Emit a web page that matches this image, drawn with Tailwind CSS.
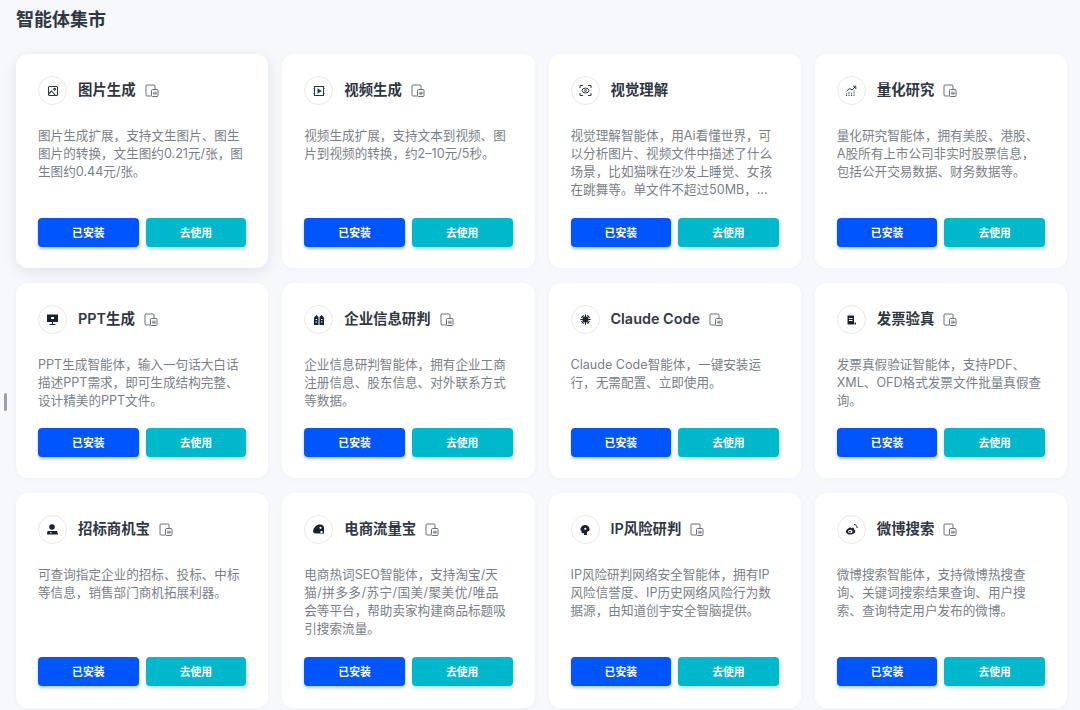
<!DOCTYPE html>
<html lang="zh">
<head>
    <meta charset="UTF-8">
    <meta name="viewport" content="width=device-width, initial-scale=1.0">
    <title>智能体集市</title>
    <script src="https://cdn.jsdelivr.net/npm/@tailwindcss/browser@4"></script>
</head>
<body class="bg-[#f6f8fb] h-[710px] overflow-hidden font-['Inter','Noto_Sans_CJK_SC',sans-serif]">
    <!-- 滚动条 -->
    <div class="absolute left-[4px] top-[393px] w-[3px] h-[18px] rounded-full bg-[#9aa0a8]"></div>

    <div class="pl-[16px] pr-[13px]">
        <h1 class="h-[54px] pt-[9px] text-[18px] leading-[22px] font-bold text-[#303744]">智能体集市</h1>

        <div class="grid grid-cols-4 grid-rows-[214px_195px_215px] gap-x-[14px] gap-y-[15px]">

            <div class="bg-white rounded-[12px] shadow-[0_4px_14px_rgba(30,50,90,0.10)] p-[22px] pb-[21px] flex flex-col">
                <div class="flex items-center h-[29px] mb-[22px]">
                    <div class="w-[29px] h-[29px] rounded-full border border-[#e8e8e8] flex items-center justify-center mr-[11px]">
                        <svg class="w-[12px] h-[12px]" viewBox="0 0 12 12" fill="none" stroke="#303744" stroke-width="1.1"><rect x="1.5" y="1.5" width="9" height="9" rx="1"/><circle cx="7.6" cy="4.2" r="0.9"/><path d="M1.5 9l3-3 4 4.5"/></svg>
                    </div>
                    <span class="pb-[1px] text-[14.4px] font-semibold text-[#303744]">图片生成</span>
                    <svg class="ml-[9px] w-[14px] h-[14px]" viewBox="0 0 14 14" fill="none" stroke="#5a606b" stroke-width="0.9"><path d="M6 12H2a1 1 0 0 1-1-1V2a1 1 0 0 1 1-1h7a1 1 0 0 1 1 1v3.500"/><rect x="6.500" y="5.500" width="6.500" height="7" rx="1"/><path d="M9 7.500v3.500M10.800 7.500v3.500M8 9.200h4" stroke-width="0.7"/></svg>
                </div>
                <p class="text-[12.6px] leading-[18px] text-[#7a7f88]">图片生成扩展，支持文生图片、图生图片的转换，文生图约0.21元/张，图生图约0.44元/张。</p>
                <div class="mt-auto grid grid-cols-2 gap-[7px] h-[29px]">
                    <button class="pt-[4px] rounded-[4px] bg-[#0055ff] shadow-[0_2px_3px_rgba(0,85,255,0.3)] text-white text-[10.8px] font-semibold">已安装</button>
                    <button class="pt-[4px] rounded-[4px] bg-[#00b8cc] shadow-[0_2px_3px_rgba(0,184,204,0.3)] text-white text-[10.8px] font-semibold">去使用</button>
                </div>
            </div>

            <div class="bg-white rounded-[12px] shadow-[0_1px_6px_rgba(30,50,90,0.03)] p-[22px] pb-[21px] flex flex-col">
                <div class="flex items-center h-[29px] mb-[22px]">
                    <div class="w-[29px] h-[29px] rounded-full border border-[#e8e8e8] flex items-center justify-center mr-[11px]">
                        <svg class="w-[12px] h-[12px]" viewBox="0 0 12 12" fill="none" stroke="#303744" stroke-width="1.1"><path d="M1.500 1.500h9v9h-9z"/><path d="M5 4.200l2.800 1.800L5 7.800z" fill="#303744"/><path d="M0.500 3.500h1.500M0.500 8.500h1.500M10 3.500h1.500M10 8.500h1.500"/></svg>
                    </div>
                    <span class="pb-[1px] text-[14.4px] font-semibold text-[#303744]">视频生成</span>
                    <svg class="ml-[9px] w-[14px] h-[14px]" viewBox="0 0 14 14" fill="none" stroke="#5a606b" stroke-width="0.9"><path d="M6 12H2a1 1 0 0 1-1-1V2a1 1 0 0 1 1-1h7a1 1 0 0 1 1 1v3.500"/><rect x="6.500" y="5.500" width="6.500" height="7" rx="1"/><path d="M9 7.500v3.500M10.800 7.500v3.500M8 9.200h4" stroke-width="0.7"/></svg>
                </div>
                <p class="text-[12.6px] leading-[18px] text-[#7a7f88]">视频生成扩展，支持文本到视频、图片到视频的转换，约2–10元/5秒。</p>
                <div class="mt-auto grid grid-cols-2 gap-[7px] h-[29px]">
                    <button class="pt-[4px] rounded-[4px] bg-[#0055ff] shadow-[0_2px_3px_rgba(0,85,255,0.3)] text-white text-[10.8px] font-semibold">已安装</button>
                    <button class="pt-[4px] rounded-[4px] bg-[#00b8cc] shadow-[0_2px_3px_rgba(0,184,204,0.3)] text-white text-[10.8px] font-semibold">去使用</button>
                </div>
            </div>

            <div class="bg-white rounded-[12px] shadow-[0_1px_6px_rgba(30,50,90,0.03)] p-[22px] pb-[21px] flex flex-col">
                <div class="flex items-center h-[29px] mb-[22px]">
                    <div class="w-[29px] h-[29px] rounded-full border border-[#e8e8e8] flex items-center justify-center mr-[11px]">
                        <svg class="w-[13px] h-[13px]" viewBox="0 0 13 13" fill="none" stroke="#303744" stroke-width="1"><path d="M1 4V1.500h3M9 1.500h3V4M12 9v2.500H9M4 11.500H1V9"/><ellipse cx="6.5" cy="6.5" rx="3.4" ry="2.4"/><circle cx="6.5" cy="6.5" r="0.9"/></svg>
                    </div>
                    <span class="pb-[1px] text-[14.4px] font-semibold text-[#303744]">视觉理解</span>
                </div>
                <p class="text-[12.6px] leading-[18px] text-[#7a7f88]">视觉理解智能体，用Ai看懂世界，可以分析图片、视频文件中描述了什么场景，比如猫咪在沙发上睡觉、女孩在跳舞等。单文件不超过50MB，…</p>
                <div class="mt-auto grid grid-cols-2 gap-[7px] h-[29px]">
                    <button class="pt-[4px] rounded-[4px] bg-[#0055ff] shadow-[0_2px_3px_rgba(0,85,255,0.3)] text-white text-[10.8px] font-semibold">已安装</button>
                    <button class="pt-[4px] rounded-[4px] bg-[#00b8cc] shadow-[0_2px_3px_rgba(0,184,204,0.3)] text-white text-[10.8px] font-semibold">去使用</button>
                </div>
            </div>

            <div class="bg-white rounded-[12px] shadow-[0_1px_6px_rgba(30,50,90,0.03)] p-[22px] pb-[21px] flex flex-col">
                <div class="flex items-center h-[29px] mb-[22px]">
                    <div class="w-[29px] h-[29px] rounded-full border border-[#e8e8e8] flex items-center justify-center mr-[11px]">
                        <svg class="w-[12px] h-[12px]" viewBox="0 0 12 12" fill="none" stroke="#303744" stroke-width="1"><path d="M1.500 6L5 3.500 7 5l3.500-3.500M8 1.200h2.800V4"/><path d="M1.500 11V8.500M4 11V6.500M6.500 11V7.500M9 11V5.500" stroke-dasharray="1 0.6"/></svg>
                    </div>
                    <span class="pb-[1px] text-[14.4px] font-semibold text-[#303744]">量化研究</span>
                    <svg class="ml-[9px] w-[14px] h-[14px]" viewBox="0 0 14 14" fill="none" stroke="#5a606b" stroke-width="0.9"><path d="M6 12H2a1 1 0 0 1-1-1V2a1 1 0 0 1 1-1h7a1 1 0 0 1 1 1v3.500"/><rect x="6.500" y="5.500" width="6.500" height="7" rx="1"/><path d="M9 7.500v3.500M10.800 7.500v3.500M8 9.200h4" stroke-width="0.7"/></svg>
                </div>
                <p class="text-[12.6px] leading-[18px] text-[#7a7f88]">量化研究智能体，拥有美股、港股、A股所有上市公司非实时股票信息，包括公开交易数据、财务数据等。</p>
                <div class="mt-auto grid grid-cols-2 gap-[7px] h-[29px]">
                    <button class="pt-[4px] rounded-[4px] bg-[#0055ff] shadow-[0_2px_3px_rgba(0,85,255,0.3)] text-white text-[10.8px] font-semibold">已安装</button>
                    <button class="pt-[4px] rounded-[4px] bg-[#00b8cc] shadow-[0_2px_3px_rgba(0,184,204,0.3)] text-white text-[10.8px] font-semibold">去使用</button>
                </div>
            </div>

            <div class="bg-white rounded-[12px] shadow-[0_1px_6px_rgba(30,50,90,0.03)] p-[22px] pb-[21px] flex flex-col">
                <div class="flex items-center h-[29px] mb-[22px]">
                    <div class="w-[29px] h-[29px] rounded-full border border-[#e8e8e8] flex items-center justify-center mr-[11px]">
                        <svg class="w-[13px] h-[13px]" viewBox="0 0 13 13" fill="#1c222d"><path d="M1 1.500h11v7.500H1z"/><path d="M6 9h1v2H6zM3.500 11h6v1h-6z"/><rect x="5" y="4" width="3" height="2" fill="#fff"/></svg>
                    </div>
                    <span class="pb-[1px] text-[14.4px] font-semibold text-[#303744]">PPT生成</span>
                    <svg class="ml-[9px] w-[14px] h-[14px]" viewBox="0 0 14 14" fill="none" stroke="#5a606b" stroke-width="0.9"><path d="M6 12H2a1 1 0 0 1-1-1V2a1 1 0 0 1 1-1h7a1 1 0 0 1 1 1v3.500"/><rect x="6.500" y="5.500" width="6.500" height="7" rx="1"/><path d="M9 7.500v3.500M10.800 7.500v3.500M8 9.200h4" stroke-width="0.7"/></svg>
                </div>
                <p class="text-[12.6px] leading-[18px] text-[#7a7f88]">PPT生成智能体，输入一句话大白话描述PPT需求，即可生成结构完整、设计精美的PPT文件。</p>
                <div class="mt-auto grid grid-cols-2 gap-[7px] h-[29px]">
                    <button class="pt-[4px] rounded-[4px] bg-[#0055ff] shadow-[0_2px_3px_rgba(0,85,255,0.3)] text-white text-[10.8px] font-semibold">已安装</button>
                    <button class="pt-[4px] rounded-[4px] bg-[#00b8cc] shadow-[0_2px_3px_rgba(0,184,204,0.3)] text-white text-[10.8px] font-semibold">去使用</button>
                </div>
            </div>

            <div class="bg-white rounded-[12px] shadow-[0_1px_6px_rgba(30,50,90,0.03)] p-[22px] pb-[21px] flex flex-col">
                <div class="flex items-center h-[29px] mb-[22px]">
                    <div class="w-[29px] h-[29px] rounded-full border border-[#e8e8e8] flex items-center justify-center mr-[11px]">
                        <svg class="w-[12px] h-[12px]" viewBox="0 0 12 12" fill="#1c222d"><path d="M1 3.500L3.500 1l2 2v8H1z"/><path d="M6.500 3l2-2L11 3.500V11H6.500z"/><path d="M2.500 5h1.500v1H2.500zM2.500 7.500h1.500v1H2.500zM8 5h1.500v1H8zM8 7.500h1.500v1H8z" fill="#fff"/></svg>
                    </div>
                    <span class="pb-[1px] text-[14.4px] font-semibold text-[#303744]">企业信息研判</span>
                    <svg class="ml-[9px] w-[14px] h-[14px]" viewBox="0 0 14 14" fill="none" stroke="#5a606b" stroke-width="0.9"><path d="M6 12H2a1 1 0 0 1-1-1V2a1 1 0 0 1 1-1h7a1 1 0 0 1 1 1v3.500"/><rect x="6.500" y="5.500" width="6.500" height="7" rx="1"/><path d="M9 7.500v3.500M10.800 7.500v3.500M8 9.200h4" stroke-width="0.7"/></svg>
                </div>
                <p class="text-[12.6px] leading-[18px] text-[#7a7f88]">企业信息研判智能体，拥有企业工商注册信息、股东信息、对外联系方式等数据。</p>
                <div class="mt-auto grid grid-cols-2 gap-[7px] h-[29px]">
                    <button class="pt-[4px] rounded-[4px] bg-[#0055ff] shadow-[0_2px_3px_rgba(0,85,255,0.3)] text-white text-[10.8px] font-semibold">已安装</button>
                    <button class="pt-[4px] rounded-[4px] bg-[#00b8cc] shadow-[0_2px_3px_rgba(0,184,204,0.3)] text-white text-[10.8px] font-semibold">去使用</button>
                </div>
            </div>

            <div class="bg-white rounded-[12px] shadow-[0_1px_6px_rgba(30,50,90,0.03)] p-[22px] pb-[21px] flex flex-col">
                <div class="flex items-center h-[29px] mb-[22px]">
                    <div class="w-[29px] h-[29px] rounded-full border border-[#e8e8e8] flex items-center justify-center mr-[11px]">
                        <svg class="w-[11px] h-[11px]" viewBox="0 0 12 12" fill="none" stroke="#1c222d" stroke-width="1.2" stroke-linecap="round"><path d="M6 .8v10.400M.8 6h10.400M2.300 2.300l7.400 7.400M9.700 2.300l-7.400 7.400"/><path d="M3.800 1.500l4.400 9M8.200 1.500L3.800 10.500M1.500 3.800l9 4.400M10.500 3.800l-9 4.400" stroke-width="0.8"/><circle cx="6" cy="6" r="2" fill="#1c222d"/></svg>
                    </div>
                    <span class="pb-[1px] text-[14.4px] font-semibold text-[#303744]">Claude Code</span>
                    <svg class="ml-[9px] w-[14px] h-[14px]" viewBox="0 0 14 14" fill="none" stroke="#5a606b" stroke-width="0.9"><path d="M6 12H2a1 1 0 0 1-1-1V2a1 1 0 0 1 1-1h7a1 1 0 0 1 1 1v3.500"/><rect x="6.500" y="5.500" width="6.500" height="7" rx="1"/><path d="M9 7.500v3.500M10.800 7.500v3.500M8 9.200h4" stroke-width="0.7"/></svg>
                </div>
                <p class="text-[12.6px] leading-[18px] text-[#7a7f88]">Claude Code智能体，一键安装运行，无需配置、立即使用。</p>
                <div class="mt-auto grid grid-cols-2 gap-[7px] h-[29px]">
                    <button class="pt-[4px] rounded-[4px] bg-[#0055ff] shadow-[0_2px_3px_rgba(0,85,255,0.3)] text-white text-[10.8px] font-semibold">已安装</button>
                    <button class="pt-[4px] rounded-[4px] bg-[#00b8cc] shadow-[0_2px_3px_rgba(0,184,204,0.3)] text-white text-[10.8px] font-semibold">去使用</button>
                </div>
            </div>

            <div class="bg-white rounded-[12px] shadow-[0_1px_6px_rgba(30,50,90,0.03)] p-[22px] pb-[21px] flex flex-col">
                <div class="flex items-center h-[29px] mb-[22px]">
                    <div class="w-[29px] h-[29px] rounded-full border border-[#e8e8e8] flex items-center justify-center mr-[11px]">
                        <svg class="w-[12px] h-[12px]" viewBox="0 0 12 12" fill="#1c222d"><path d="M2.500 1.500h6.500v9h-6.500z"/><path d="M4 4h3.500v1H4zM4 6h3.500v1H4z" fill="#fff"/><path d="M9.500 8.500h1.500v2H9.500z"/></svg>
                    </div>
                    <span class="pb-[1px] text-[14.4px] font-semibold text-[#303744]">发票验真</span>
                    <svg class="ml-[9px] w-[14px] h-[14px]" viewBox="0 0 14 14" fill="none" stroke="#5a606b" stroke-width="0.9"><path d="M6 12H2a1 1 0 0 1-1-1V2a1 1 0 0 1 1-1h7a1 1 0 0 1 1 1v3.500"/><rect x="6.500" y="5.500" width="6.500" height="7" rx="1"/><path d="M9 7.500v3.500M10.800 7.500v3.500M8 9.200h4" stroke-width="0.7"/></svg>
                </div>
                <p class="text-[12.6px] leading-[18px] text-[#7a7f88]">发票真假验证智能体，支持PDF、XML、OFD格式发票文件批量真假查询。</p>
                <div class="mt-auto grid grid-cols-2 gap-[7px] h-[29px]">
                    <button class="pt-[4px] rounded-[4px] bg-[#0055ff] shadow-[0_2px_3px_rgba(0,85,255,0.3)] text-white text-[10.8px] font-semibold">已安装</button>
                    <button class="pt-[4px] rounded-[4px] bg-[#00b8cc] shadow-[0_2px_3px_rgba(0,184,204,0.3)] text-white text-[10.8px] font-semibold">去使用</button>
                </div>
            </div>

            <div class="bg-white rounded-[12px] shadow-[0_1px_6px_rgba(30,50,90,0.03)] p-[22px] pb-[22px] flex flex-col">
                <div class="flex items-center h-[29px] mb-[22px]">
                    <div class="w-[29px] h-[29px] rounded-full border border-[#e8e8e8] flex items-center justify-center mr-[11px]">
                        <svg class="w-[13px] h-[13px]" viewBox="0 0 13 13" fill="#1c222d"><circle cx="6" cy="4" r="2.800"/><path d="M1.500 8h9.500l1 3.500H1z"/><path d="M4 9.300h1.500v1H4z" fill="#fff"/></svg>
                    </div>
                    <span class="pb-[1px] text-[14.4px] font-semibold text-[#303744]">招标商机宝</span>
                    <svg class="ml-[9px] w-[14px] h-[14px]" viewBox="0 0 14 14" fill="none" stroke="#5a606b" stroke-width="0.9"><path d="M6 12H2a1 1 0 0 1-1-1V2a1 1 0 0 1 1-1h7a1 1 0 0 1 1 1v3.500"/><rect x="6.500" y="5.500" width="6.500" height="7" rx="1"/><path d="M9 7.500v3.500M10.800 7.500v3.500M8 9.200h4" stroke-width="0.7"/></svg>
                </div>
                <p class="text-[12.6px] leading-[18px] text-[#7a7f88]">可查询指定企业的招标、投标、中标等信息，销售部门商机拓展利器。</p>
                <div class="mt-auto grid grid-cols-2 gap-[7px] h-[29px]">
                    <button class="pt-[4px] rounded-[4px] bg-[#0055ff] shadow-[0_2px_3px_rgba(0,85,255,0.3)] text-white text-[10.8px] font-semibold">已安装</button>
                    <button class="pt-[4px] rounded-[4px] bg-[#00b8cc] shadow-[0_2px_3px_rgba(0,184,204,0.3)] text-white text-[10.8px] font-semibold">去使用</button>
                </div>
            </div>

            <div class="bg-white rounded-[12px] shadow-[0_1px_6px_rgba(30,50,90,0.03)] p-[22px] pb-[22px] flex flex-col">
                <div class="flex items-center h-[29px] mb-[22px]">
                    <div class="w-[29px] h-[29px] rounded-full border border-[#e8e8e8] flex items-center justify-center mr-[11px]">
                        <svg class="w-[13px] h-[13px]" viewBox="0 0 13 13" fill="#1c222d"><path d="M1 8C2 4 4.500 1.500 8 1.500c2.500 0 4 1.500 4 3.500v5.500H3.500C2 10.500 1 9.500 1 8z"/><circle cx="8.500" cy="4.800" r="1.100" fill="#fff"/><path d="M8.500 8h2v2h-2z" fill="#fff"/></svg>
                    </div>
                    <span class="pb-[1px] text-[14.4px] font-semibold text-[#303744]">电商流量宝</span>
                    <svg class="ml-[9px] w-[14px] h-[14px]" viewBox="0 0 14 14" fill="none" stroke="#5a606b" stroke-width="0.9"><path d="M6 12H2a1 1 0 0 1-1-1V2a1 1 0 0 1 1-1h7a1 1 0 0 1 1 1v3.500"/><rect x="6.500" y="5.500" width="6.500" height="7" rx="1"/><path d="M9 7.500v3.500M10.800 7.500v3.500M8 9.200h4" stroke-width="0.7"/></svg>
                </div>
                <p class="text-[12.6px] leading-[18px] text-[#7a7f88]">电商热词SEO智能体，支持淘宝/天<br><span class="tracking-[0.45px]">猫/拼多多/苏宁/国美/聚美优/唯品</span><br>会等平台，帮助卖家构建商品标题吸<br>引搜索流量。</p>
                <div class="mt-auto grid grid-cols-2 gap-[7px] h-[29px]">
                    <button class="pt-[4px] rounded-[4px] bg-[#0055ff] shadow-[0_2px_3px_rgba(0,85,255,0.3)] text-white text-[10.8px] font-semibold">已安装</button>
                    <button class="pt-[4px] rounded-[4px] bg-[#00b8cc] shadow-[0_2px_3px_rgba(0,184,204,0.3)] text-white text-[10.8px] font-semibold">去使用</button>
                </div>
            </div>

            <div class="bg-white rounded-[12px] shadow-[0_1px_6px_rgba(30,50,90,0.03)] p-[22px] pb-[22px] flex flex-col">
                <div class="flex items-center h-[29px] mb-[22px]">
                    <div class="w-[29px] h-[29px] rounded-full border border-[#e8e8e8] flex items-center justify-center mr-[11px]">
                        <svg class="w-[12px] h-[12px]" viewBox="0 0 12 12" fill="#1c222d"><path d="M6 1a4.600 4.600 0 0 1 4.600 4.600c0 .7-.3 1.200-.8 1.400L8 8v3H5V9.300H3.800c-.8 0-1.300-.6-1.300-1.300V6.800L1.400 6.200C1.400 3.200 3.300 1 6 1z"/><circle cx="6.300" cy="4.800" r="1.100" fill="#fff"/></svg>
                    </div>
                    <span class="pb-[1px] text-[14.4px] font-semibold text-[#303744]">IP风险研判</span>
                    <svg class="ml-[9px] w-[14px] h-[14px]" viewBox="0 0 14 14" fill="none" stroke="#5a606b" stroke-width="0.9"><path d="M6 12H2a1 1 0 0 1-1-1V2a1 1 0 0 1 1-1h7a1 1 0 0 1 1 1v3.500"/><rect x="6.500" y="5.500" width="6.500" height="7" rx="1"/><path d="M9 7.500v3.500M10.800 7.500v3.500M8 9.200h4" stroke-width="0.7"/></svg>
                </div>
                <p class="text-[12.6px] leading-[18px] text-[#7a7f88]">IP风险研判网络安全智能体，拥有IP风险信誉度、IP历史网络风险行为数据源，由知道创宇安全智脑提供。</p>
                <div class="mt-auto grid grid-cols-2 gap-[7px] h-[29px]">
                    <button class="pt-[4px] rounded-[4px] bg-[#0055ff] shadow-[0_2px_3px_rgba(0,85,255,0.3)] text-white text-[10.8px] font-semibold">已安装</button>
                    <button class="pt-[4px] rounded-[4px] bg-[#00b8cc] shadow-[0_2px_3px_rgba(0,184,204,0.3)] text-white text-[10.8px] font-semibold">去使用</button>
                </div>
            </div>

            <div class="bg-white rounded-[12px] shadow-[0_1px_6px_rgba(30,50,90,0.03)] p-[22px] pb-[22px] flex flex-col">
                <div class="flex items-center h-[29px] mb-[22px]">
                    <div class="w-[29px] h-[29px] rounded-full border border-[#e8e8e8] flex items-center justify-center mr-[11px]">
                        <svg class="w-[13px] h-[13px]" viewBox="0 0 13 13" fill="#1c222d"><path d="M5.600 4.200C3.200 5 .8 7 1 9c.2 1.800 2.600 2.800 5 2.500 2.400-.3 4.600-1.800 4.300-3.500-.2-1-1.200-1.300-1.500-1.400.3-.8.2-1.500-.4-1.800-.6-.3-1.500-.2-2.800.4z"/><ellipse cx="5.300" cy="8.500" rx="2.200" ry="1.700" fill="#fff"/><circle cx="5" cy="8.600" r="0.900"/><path d="M9 1.500a3 3 0 0 1 3 3.500" fill="none" stroke="#1c222d"/></svg>
                    </div>
                    <span class="pb-[1px] text-[14.4px] font-semibold text-[#303744]">微博搜索</span>
                    <svg class="ml-[9px] w-[14px] h-[14px]" viewBox="0 0 14 14" fill="none" stroke="#5a606b" stroke-width="0.9"><path d="M6 12H2a1 1 0 0 1-1-1V2a1 1 0 0 1 1-1h7a1 1 0 0 1 1 1v3.500"/><rect x="6.500" y="5.500" width="6.500" height="7" rx="1"/><path d="M9 7.500v3.500M10.800 7.500v3.500M8 9.200h4" stroke-width="0.7"/></svg>
                </div>
                <p class="text-[12.6px] leading-[18px] text-[#7a7f88]">微博搜索智能体，支持微博热搜查询、关键词搜索结果查询、用户搜索、查询特定用户发布的微博。</p>
                <div class="mt-auto grid grid-cols-2 gap-[7px] h-[29px]">
                    <button class="pt-[4px] rounded-[4px] bg-[#0055ff] shadow-[0_2px_3px_rgba(0,85,255,0.3)] text-white text-[10.8px] font-semibold">已安装</button>
                    <button class="pt-[4px] rounded-[4px] bg-[#00b8cc] shadow-[0_2px_3px_rgba(0,184,204,0.3)] text-white text-[10.8px] font-semibold">去使用</button>
                </div>
            </div>

        </div>
    </div>
</body>
</html>
